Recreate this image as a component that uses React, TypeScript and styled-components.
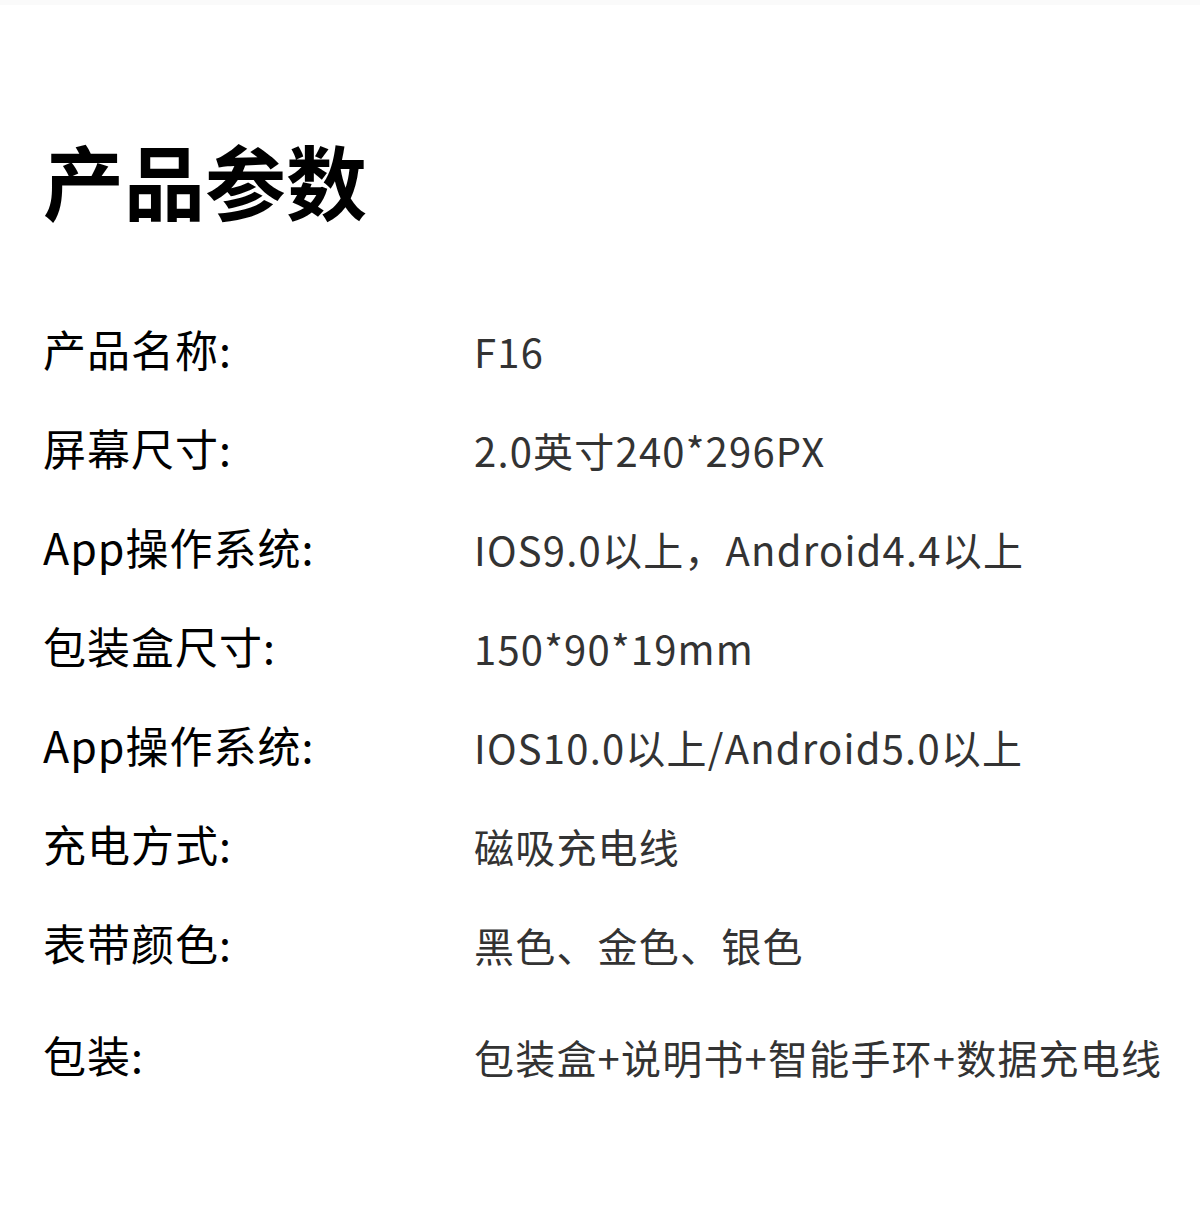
import React from "react";
import styled, { createGlobalStyle } from "styled-components";

const Global = createGlobalStyle`
  html, body { margin: 0; padding: 0; background: #fff; }
  body { font-family: "Noto Sans CJK SC", "Noto Sans", sans-serif; }
`;

const Page = styled.div`
  width: 1200px;
  min-height: 1227px;
  background: #fff;
`;

const TopBar = styled.div`
  height: 5px;
  background: #fafafa;
`;

const Content = styled.div`
  padding: 0 0 0 43px;
`;

const Title = styled.h1`
  margin: 129px 0 0 0;
  font-size: 81px;
  line-height: 90px;
  font-weight: 700;
  color: #000;
  letter-spacing: 0;
`;

const Table = styled.div`
  margin-top: 76px;
  display: flex;
  flex-direction: column;
`;

const Row = styled.div<{ $extra?: number }>`
  display: grid;
  grid-template-columns: 431px 1fr;
  height: 99px;
  align-items: center;
  margin-top: ${(p) => p.$extra ?? 0}px;
`;

const Label = styled.div`
  font-size: 43px;
  color: #000;
  font-weight: 400;
  white-space: nowrap;
  letter-spacing: 1px;
  margin-top: -4px;
`;

const Value = styled.div`
  font-size: 40px;
  color: #333;
  font-weight: 400;
  white-space: nowrap;
  letter-spacing: 1.2px;
  margin-top: 2px;
`;

const rows: { label: string; value: string; extra?: number }[] = [
  { label: "产品名称:", value: "F16" },
  { label: "屏幕尺寸:", value: "2.0英寸240*296PX" },
  { label: "App操作系统:", value: "IOS9.0以上，Android4.4以上" },
  { label: "包装盒尺寸:", value: "150*90*19mm" },
  { label: "App操作系统:", value: "IOS10.0以上/Android5.0以上" },
  { label: "充电方式:", value: "磁吸充电线" },
  { label: "表带颜色:", value: "黑色、金色、银色" },
  { label: "包装:", value: "包装盒+说明书+智能手环+数据充电线", extra: 13 },
];

export default function App() {
  return (
    <Page>
      <Global />
      <TopBar />
      <Content>
        <Title>产品参数</Title>
        <Table>
          {rows.map((r, i) => (
            <Row key={i} $extra={r.extra}>
              <Label>{r.label}</Label>
              <Value>{r.value}</Value>
            </Row>
          ))}
        </Table>
      </Content>
    </Page>
  );
}
